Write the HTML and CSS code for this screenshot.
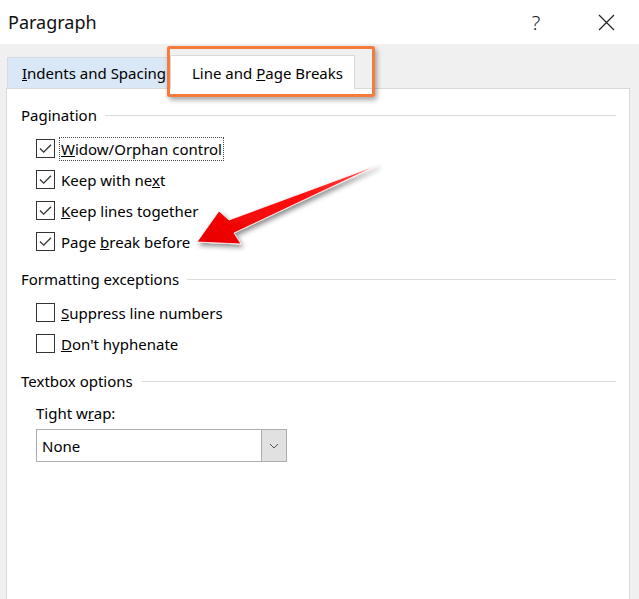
FILE: index.html
```html
<!DOCTYPE html>
<html lang="en">
<head>
  <meta charset="UTF-8" />
  <title>Paragraph</title>
  <link rel="stylesheet" href="styles.css">
</head>
<body>
  <div class="dialog">

    <div class="titlebar">
      <span class="title">Paragraph</span>
      <span class="help">?</span>
      <span class="close">
        <svg width="17" height="17" viewBox="0 0 17 17">
          <path d="M1 1 L16 16 M16 1 L1 16" stroke="#222" stroke-width="1.2" fill="none"/>
        </svg>
      </span>
    </div>

    <div class="tabstrip">
      <div class="tab"><span><u>I</u>ndents and Spacing</span></div>
      <div class="tab active"><span>Line and <u>P</u>age Breaks</span></div>
      <!-- callout box round the selected tab -->
      <div class="callout"></div>
    </div>

    <div class="panel">
      <div class="group-head"><span>Pagination</span></div>
      <div class="check-row">
        <span class="box checked"></span>
        <span class="label focus"><u>W</u>idow/Orphan control</span>
      </div>
      <div class="check-row">
        <span class="box checked"></span>
        <span class="label">Keep with ne<u>x</u>t</span>
      </div>
      <div class="check-row">
        <span class="box checked"></span>
        <span class="label"><u>K</u>eep lines together</span>
      </div>
      <div class="check-row">
        <span class="box checked"></span>
        <span class="label">Page <u>b</u>reak before</span>
      </div>

      <div class="group-head"><span>Formatting exceptions</span></div>
      <div class="check-row">
        <span class="box"></span>
        <span class="label"><u>S</u>uppress line numbers</span>
      </div>
      <div class="check-row">
        <span class="box"></span>
        <span class="label"><u>D</u>on't hyphenate</span>
      </div>

      <div class="group-head"><span>Textbox options</span></div>
      <div class="field-label"><span>Tight w<u>r</u>ap:</span></div>
      <div class="select">
        <span class="select-value">None</span>
        <span class="select-btn">
          <svg width="10" height="6" viewBox="0 0 10 6">
            <path d="M1 1 L5 5 L9 1" stroke="#555" stroke-width="1" fill="none"/>
          </svg>
        </span>
      </div>
    </div>

    <!-- red pointer arrow -->
    <svg class="arrow" width="200" height="100" viewBox="190 155 200 100">
      <defs>
        <linearGradient id="arrowFill" x1="0" y1="1" x2="1" y2="0">
          <stop offset="0" stop-color="#e80000"/>
          <stop offset="0.6" stop-color="#ff1010"/>
          <stop offset="1" stop-color="#ff5050"/>
        </linearGradient>
        <filter id="arrowShadow" x="-20%" y="-20%" width="150%" height="160%">
          <feDropShadow dx="2" dy="3" stdDeviation="2.5" flood-color="#000" flood-opacity="0.45"/>
        </filter>
      </defs>
      <polygon points="197,242 219,211 229,220 378,165 234,233 241,244"
               fill="url(#arrowFill)" stroke="#fff" stroke-width="0.8"
               stroke-linejoin="round" filter="url(#arrowShadow)"/>
    </svg>
  </div>
</body>
</html>
```

FILE: styles.css
```css
* {
  margin: 0;
  padding: 0;
  box-sizing: border-box;
}

body {
  background: #f0f0f0;
  font-family: 'Noto Sans', 'Segoe UI', sans-serif;
  font-size: 15px;
  color: #000;
}

.dialog {
  position: relative;
  width: 639px;
  height: 599px;
  overflow: hidden;
  background: #f0f0f0;
}

/* title bar */
.titlebar {
  height: 44px;
  background: #fff;
  display: flex;
  align-items: center;
  padding-left: 8px;
}

.title {
  font-size: 18px;
  flex: 1;
  color: #111;
}

.help {
  font-size: 20px;
  font-weight: 300;
  color: #222;
  width: 20px;
  text-align: center;
  margin-right: 52px;
}

.close {
  display: flex;
  margin-right: 24px;
}

/* tabs */
.tabstrip {
  position: relative;
  display: flex;
  align-items: flex-end;
  height: 44px;
  padding-left: 7px;
}

.tab {
  height: 31px;
  padding: 0 6px 0 14px;
  display: flex;
  align-items: center;
  background: #d9e7f7;
  border: 1px solid #d5dbe2;
  border-bottom: none;
  width: 163px;
  white-space: nowrap;
}

.tab.active {
  height: 34px;
  width: 185px;
  padding-left: 21px;
  margin-bottom: -1px;
  background: #fff;
  border-color: #d9d9d9;
  position: relative;
  z-index: 1;
}

.callout {
  position: absolute;
  left: 167px;
  top: 2px;
  width: 208px;
  height: 51px;
  border: 3px solid #f77b3c;
  border-radius: 2px;
  box-shadow: 2px 3px 5px rgba(0, 0, 0, 0.35);
  z-index: 2;
}

/* page */
.panel {
  margin-left: 6px;
  width: 624px;
  height: 520px;
  background: #fff;
  border: 1px solid #d9d9d9;
  padding: 14px 13px 0 14px;
}

.group-head {
  height: 24px;
  display: flex;
  align-items: center;
  margin-bottom: 6px;
}

.group-head::after {
  content: "";
  flex: 1;
  height: 1px;
  background: #dcdcdc;
  margin-left: 8px;
}

.check-row + .group-head {
  margin-top: 10px;
}

.check-row {
  height: 31px;
  display: flex;
  align-items: center;
  padding-left: 15px;
}

.box {
  width: 19px;
  height: 19px;
  border: 1px solid #333;
  background: #fff;
  margin-right: 4px;
  flex-shrink: 0;
}

.box.checked {
  background: #fff url("data:image/svg+xml,%3Csvg xmlns='http://www.w3.org/2000/svg' width='17' height='17'%3E%3Cpath d='M3 8.5 L6.7 12.2 L14 4.8' stroke='%23333' stroke-width='1.3' fill='none'/%3E%3C/svg%3E") no-repeat center;
}

.label {
  padding: 1px 1px;
  border: 1px dotted transparent;
  white-space: nowrap;
}

.label.focus {
  border-color: #444;
}

.field-label {
  padding-left: 15px;
  height: 28px;
  display: flex;
  align-items: center;
  margin-top: 2px;
}

.select {
  margin-left: 15px;
  margin-top: 2px;
  width: 251px;
  height: 33px;
  display: flex;
  border: 1px solid #adadad;
  background: #fff;
}

.select-value {
  flex: 1;
  display: flex;
  align-items: center;
  padding-left: 5px;
}

.select-btn {
  width: 25px;
  background: #e1e1e1;
  border-left: 1px solid #adadad;
  display: flex;
  align-items: center;
  justify-content: center;
}

.arrow {
  position: absolute;
  left: 190px;
  top: 155px;
  overflow: visible;
  z-index: 3;
}
```
